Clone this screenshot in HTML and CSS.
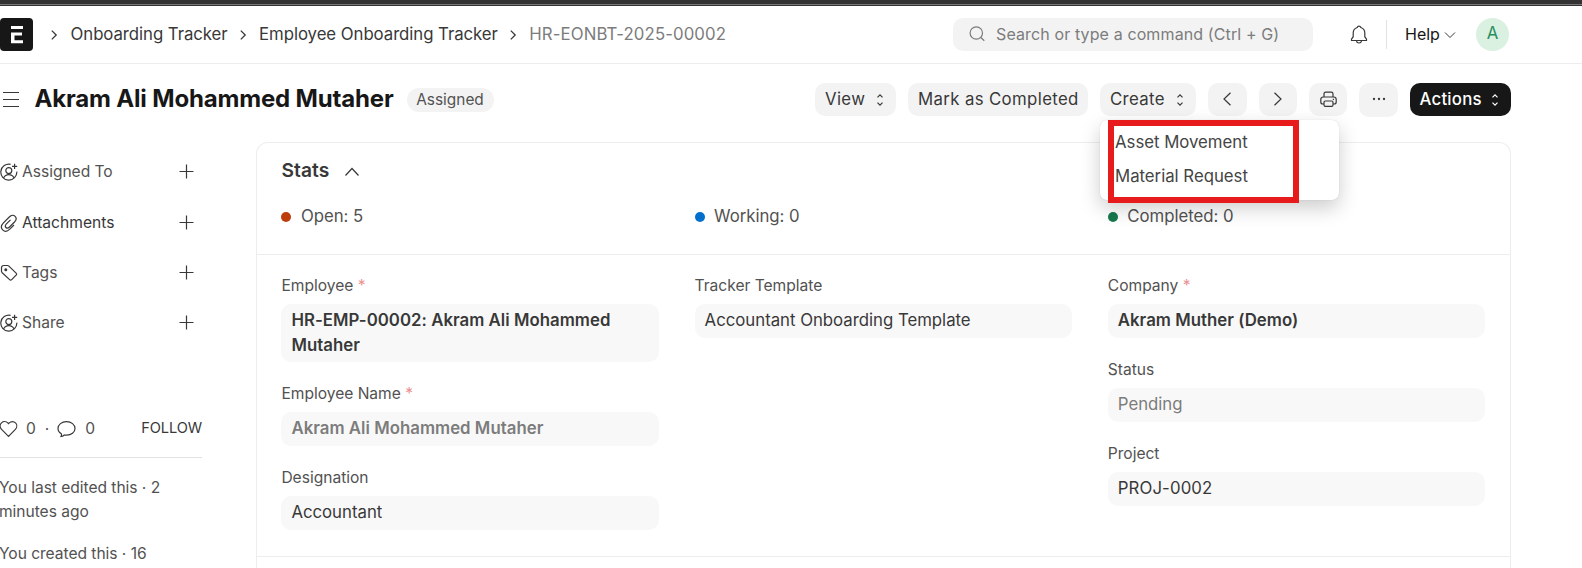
FILE: index.html
```html
<!DOCTYPE html>
<html lang="en">
<head>
<meta charset="utf-8">
<title>HR-EONBT-2025-00002</title>
<link rel="stylesheet" href="styles.css">
</head>
<body>
<svg class="defs" width="0" height="0">
  <symbol id="user-plus" viewBox="0 0 18 18"><path d="M10.600 1.300A8 8 0 1 0 16.800 8.600M3.600 14.900c1-2 2.900-3.200 5.200-3.200s4.200 1.200 5.200 3.200M14.600.7v5.200M12 3.300h5.200"/><circle cx="8.800" cy="7.600" r="3"/></symbol>
  <symbol id="plus" viewBox="0 0 16 16"><path d="M8.500 1.500v14M1.500 8.500h14"/></symbol>
  <symbol id="sort" viewBox="0 0 8 14"><path d="M1.500 4.300 4 1.800l2.500 2.500M1.500 9.700 4 12.200l2.500-2.500"/></symbol>
  <symbol id="crumb" viewBox="0 0 8 12"><path d="M1.800 1.600 6.200 6l-4.400 4.400"/></symbol>
</svg>
<div class="window-edge"></div>
<header class="navbar">
  <div class="logo"><svg width="33" height="33" viewBox="0 0 33 33"><path fill="#fff" d="M11 8h12v3H11zM11 14.500h11v3h-7.500v4.700H23v3H11z"/></svg></div>
  <nav class="crumbs">
    <svg class="ic crumb"><use href="#crumb"/></svg><span>Onboarding Tracker</span>
    <svg class="ic crumb"><use href="#crumb"/></svg><span>Employee Onboarding Tracker</span>
    <svg class="ic crumb"><use href="#crumb"/></svg><span class="current">HR-EONBT-2025-00002</span>
  </nav>
  <div class="search"><svg class="ic" width="16" height="16" viewBox="0 0 16 16"><circle cx="7.300" cy="7" r="6.200"/><path d="m11.800 11.500 3.500 3.300"/></svg><span>Search or type a command (Ctrl + G)</span></div>
  <svg class="ic bell" width="18" height="20" viewBox="0 0 18 20"><path d="M1.500 16.500v-1.300l1.700-2.500V9a5.800 5.800 0 0 1 4-5.500C7.500 2.500 8 2.200 9 2.200s1.500.3 1.800 1.300a5.800 5.800 0 0 1 4 5.500v3.700l1.700 2.500v1.300zM6.500 17c.2 1.300 1 2 2.500 2s2.300-.7 2.500-2"/></svg>
  <div class="rule"></div>
  <span class="help">Help</span>
  <svg class="ic help-arrow" width="12" height="8" viewBox="0 0 12 8"><path d="m1 1.500 5 5 5-5"/></svg>
  <div class="avatar">A</div>
</header>
<div class="page-head">
  <svg class="ic burger" width="16" height="18" viewBox="0 0 16 18"><path d="M0 1.500h16M0 8.500h16M0 15.500h16"/></svg>
  <h1>Akram Ali Mohammed Mutaher</h1>
  <span class="pill">Assigned</span>
  <div class="actions">
    <button class="btn view">View<svg class="ic sort"><use href="#sort"/></svg></button>
    <button class="btn mark">Mark as Completed</button>
    <div class="dropdown">
      <button class="btn create">Create<svg class="ic sort"><use href="#sort"/></svg></button>
      <div class="menu"><a>Asset Movement</a><a>Material Request</a></div>
      <div class="highlight"></div>
    </div>
    <button class="btn icon wide"><svg class="ic" width="10" height="16" viewBox="0 0 10 16"><path d="M8.500 1.800 2 8l6.500 6.200"/></svg></button>
    <button class="btn icon"><svg class="ic" width="10" height="16" viewBox="0 0 10 16"><path d="M1.500 1.800 8 8l-6.500 6.200"/></svg></button>
    <button class="btn icon"><svg class="ic" width="17" height="17" viewBox="0 0 17 17"><path d="M4 6V3C4 1.700 4.500 1.200 5.800 1.200h5.400C12.500 1.200 13 1.700 13 3v3M4 13H2.800C1.400 13 .8 12.400.8 11V8.500C.8 6.800 1.600 6 3.300 6h10.400c1.700 0 2.500.8 2.500 2.500V11c0 1.400-.6 2-2 2H13M5.300 10h6.400c.9 0 1.300.4 1.300 1.300v2.800c0 .9-.4 1.300-1.300 1.300H5.300c-.9 0-1.300-.4-1.300-1.300v-2.800c0-.9.4-1.300 1.300-1.300zM12.800 8.300h1.200"/></svg></button>
    <button class="btn icon dots"><svg width="14" height="4" viewBox="0 0 14 4" fill="#383838"><circle cx="2" cy="2" r="1.150"/><circle cx="7" cy="2" r="1.150"/><circle cx="12" cy="2" r="1.150"/></svg></button>
    <button class="btn primary">Actions<svg class="ic sort"><use href="#sort"/></svg></button>
  </div>
</div>
<main class="body">
  <aside class="side">
    <div class="side-row"><svg class="ic" width="18" height="18"><use href="#user-plus"/></svg><span>Assigned To</span><svg class="ic plus"><use href="#plus"/></svg></div>
    <div class="side-row dark"><svg class="ic" width="18" height="18" viewBox="0 0 18 18"><path d="m14 11-4.200 4.200c-2.400 2.300-5.300 2.500-7.100.7s-1.600-4.600.7-7L9.300 3c2-2 4.300-2.200 5.800-.7s1.300 3.700-.6 5.700l-5 5c-1.300 1.300-2.700 1.400-3.600.5s-.8-2.300.5-3.600L10.500 5.900"/></svg><span>Attachments</span><svg class="ic plus"><use href="#plus"/></svg></div>
    <div class="side-row"><svg class="ic" width="18" height="18" viewBox="0 0 18 18"><path d="M1.500 3.800C1.500 2.200 2.200 1.500 3.700 1.500h3.800c.6 0 1 .2 1.400.6l7.200 7c.7.700.7 1.400 0 2.100l-4.400 4.400c-.7.700-1.400.7-2.100 0L2.200 8.700c-.4-.4-.7-.9-.7-1.500z"/><circle cx="5.800" cy="5.700" r=".9" fill="#383838"/></svg><span>Tags</span><svg class="ic plus"><use href="#plus"/></svg></div>
    <div class="side-row"><svg class="ic" width="18" height="18"><use href="#user-plus"/></svg><span>Share</span><svg class="ic plus"><use href="#plus"/></svg></div>
    <div class="social">
      <svg class="ic" width="18" height="18" viewBox="0 0 18 18"><path d="M8.500 16.300 1.600 9.400C-.2 7.500-.2 4.600 1.500 2.900c1.800-1.800 4.600-1.700 6.300 0l.7.800.8-.8c1.700-1.700 4.500-1.800 6.200 0 1.700 1.700 1.700 4.600-.1 6.500z"/></svg>
      <span class="likes">0</span><span class="sep">·</span>
      <svg class="ic bubble" width="19" height="18" viewBox="0 0 19 18"><path d="M4 16.500c.5-.8.600-1.700.4-2.700C2.200 12.600 1 10.700 1 8.500 1 4.500 4.700 1.700 9.500 1.700S18 4.500 18 8.500s-3.700 6.700-8.500 6.700c-.8 0-1.500-.1-2.200-.2-1 .9-2.100 1.400-3.300 1.500z"/></svg>
      <span>0</span><span class="follow">FOLLOW</span>
    </div>
    <p>You last edited this · 2<br>minutes ago</p>
    <p>You created this · 16</p>
  </aside>
  <section class="card">
    <div class="stats">
      <h2>Stats<svg class="ic" width="16" height="10" viewBox="0 0 16 10"><path d="m1.500 8.500 6.500-7 6.500 7"/></svg></h2>
      <div class="cols">
        <div class="stat"><i class="dot open"></i>Open: 5</div>
        <div class="stat"><i class="dot working"></i>Working: 0</div>
        <div class="stat"><i class="dot done"></i>Completed: 0</div>
      </div>
    </div>
    <div class="cols form">
      <div class="col">
        <div class="field"><label>Employee <b>*</b></label><div class="value strong">HR-EMP-00002: Akram Ali Mohammed Mutaher</div></div>
        <div class="field"><label>Employee Name <b>*</b></label><div class="value strong muted">Akram Ali Mohammed Mutaher</div></div>
        <div class="field"><label>Designation</label><div class="value">Accountant</div></div>
      </div>
      <div class="col">
        <div class="field"><label>Tracker Template</label><div class="value">Accountant Onboarding Template</div></div>
      </div>
      <div class="col">
        <div class="field"><label>Company <b>*</b></label><div class="value strong">Akram Muther (Demo)</div></div>
        <div class="field"><label>Status</label><div class="value muted">Pending</div></div>
        <div class="field"><label>Project</label><div class="value code">PROJ-0002</div></div>
      </div>
    </div>
  </section>
</main>
</body>
</html>
```
FILE: styles.css
```css
* { box-sizing: border-box; }
html, body { height: 100%; }
body { margin: 0; overflow: hidden; background: #fff; color: #383838; font: 400 16.8px/25.2px Inter, "Liberation Sans", sans-serif; display: flex; flex-direction: column; }
.defs { position: absolute; }
.ic { fill: none; stroke: #383838; stroke-width: 1.2; flex: none; }
.window-edge { flex: none; height: 6px; background: linear-gradient(#333 4px, #777 4px, #777 5px, #333 5px); }
.navbar { flex: none; height: 58px; border-bottom: 1px solid #ededed; display: flex; align-items: center; padding: 0 73px 1px 0; }
.logo { width: 33px; height: 33px; border-radius: 4px; background: #171717; flex: none; }
.logo svg { display: block; }
.crumbs { display: flex; align-items: center; margin-left: 17px; white-space: nowrap; flex: 1; }
.crumb { width: 8px; height: 12px; margin: 2px 12.500px 0 0; stroke-width: 1.3; }
.crumbs span { margin-right: 11px; padding-top: 2px; letter-spacing: -.06px; }
.crumbs .current { color: #7c7c7c; letter-spacing: .1px; }
.search { width: 360px; height: 33px; border-radius: 10px; background: #f3f3f3; color: #7c7c7c; display: flex; align-items: center; padding-left: 16px; gap: 11px; font-size: 16px; letter-spacing: .12px; white-space: nowrap; flex: none; }
.search .ic { stroke: #7c7c7c; }
.search span { padding-top: 1px; }
.bell { margin-left: 37px; }
.rule { width: 1px; height: 29px; background: #e2e2e2; margin: 0 18px 0 18px; }
.help { color: #171717; width: 34px; font-size: 16px; padding-top: 1px; }
.help-arrow { margin: 2px 0 0 5px; stroke-width: 1; }
.avatar { width: 33px; height: 33px; margin-left: 20px; border-radius: 50%; background: #daf0e1; color: #278f5e; display: flex; align-items: center; justify-content: center; }
.page-head { flex: none; height: 71px; display: flex; align-items: center; padding: 0 71px 0 3px; }
.burger { stroke-width: 1; }
h1 { margin: 0 0 1px 15.500px; font-size: 24px; line-height: 34px; font-weight: 700; color: #171717; white-space: nowrap; letter-spacing: -.17px; }
.pill { margin-left: 13px; width: 87px; height: 24px; border-radius: 12px; background: #f3f3f3; color: #525252; font-size: 15.400px; line-height: 24px; text-align: center; }
.actions { margin-left: auto; display: flex; gap: 12px; }
.btn { height: 33px; border: 0; border-radius: 10px; background: #f3f3f3; color: #383838; font: inherit; letter-spacing: .36px; display: flex; align-items: center; justify-content: space-between; padding: 1px 10px 0; white-space: nowrap; }
.sort { width: 8px; height: 14px; margin-right: 2px; }
.view { width: 81px; }
.mark { width: 180px; }
.create { width: 96px; }
.icon { width: 38px; justify-content: center; padding-top: 0; }
.wide, .dots { width: 39px; }
.wide { padding-right: 12px; }
.dots { height: 34px; padding-bottom: 2px; }
.primary { width: 101px; padding-left: 9.500px; background: #171717; color: #fff; font-weight: 500; letter-spacing: .22px; }
.primary .ic { stroke: #fff; }
.dropdown { position: relative; }
.menu { position: absolute; z-index: 2; left: 0; top: 37px; width: 239px; height: 80px; border-radius: 7px; background: #fff; box-shadow: 0 0 1px rgba(0,0,0,.2), 0 8px 20px rgba(0,0,0,.2); padding: 5px 15px; color: #444; letter-spacing: -.02px; }
.menu a { display: block; height: 34px; line-height: 34px; }
.highlight { position: absolute; z-index: 3; left: 8px; top: 37px; width: 191px; height: 83px; border: 6px solid #e71b1b; }
.body { display: flex; flex: 1; min-height: 0; padding: 7px 71px 0 0; }
.side { width: 202px; margin-right: 54px; padding-top: 5px; color: #525252; font-size: 15.6px; flex: none; white-space: nowrap; }
.side-row { height: 50.4px; display: flex; align-items: center; }
.side-row span { margin: 0 0 1px 4px; letter-spacing: -.03px; }
.side-row.dark { color: #383838; }
.side-row.dark span { margin-bottom: 0; letter-spacing: 0; }
.side-row .plus { width: 16px; height: 16px; margin: 0 8px 2px auto; }
.social { height: 57px; margin-top: 52px; border-bottom: 1px solid #e2e2e2; display: flex; align-items: center; }
.likes { margin-left: 8px; }
.sep { margin: 0 8px 0 9px; }
.bubble { margin-right: 9px; }
.follow { margin-left: auto; padding-top: 1px; color: #383838; font-size: 14.600px; letter-spacing: -.1px; }
.side p { margin: 18.800px 0 0 -1px; line-height: 23.4px; letter-spacing: -.04px; }
.card { flex: 1; border: 1px solid #ededed; border-bottom: 0; border-radius: 12px 12px 0 0; }
.stats { height: 112px; border-bottom: 1px solid #ededed; padding: 14px 25px 0 24.400px; }
h2 { margin: 0; font-size: 19.2px; line-height: 26px; font-weight: 600; display: flex; align-items: center; gap: 15px; letter-spacing: .1px; }
h2 .ic { margin-top: 3px; }
.cols { display: grid; grid-template-columns: repeat(3, 1fr); column-gap: 36px; }
.stats .cols { margin-top: 21px; }
.stat { display: flex; align-items: center; color: #525252; letter-spacing: -.04px; }
.dot { width: 10px; height: 10px; border-radius: 50%; margin-right: 9.500px; }
.open { background: #bd3e0c; }
.working { background: #0070cc; }
.done { background: #16794c; }
.form { height: 302px; border-bottom: 1px solid #ededed; padding: 18.800px 25px 0 24.400px; }
.field { margin-bottom: 20.100px; }
label { display: block; color: #525252; font-size: 15.6px; line-height: 23.4px; margin-bottom: 7px; letter-spacing: -.02px; }
label b { color: #eb9091; font-weight: 400; }
.value { min-height: 33.6px; padding: 3.800px 10px 4.600px; line-height: 24.600px; border-radius: 10px; background: #f8f8f8; letter-spacing: -.02px; }
.code { letter-spacing: .1px; }
.strong { font-weight: 600; letter-spacing: .03px; }
.muted { color: #7c7c7c; }
```
